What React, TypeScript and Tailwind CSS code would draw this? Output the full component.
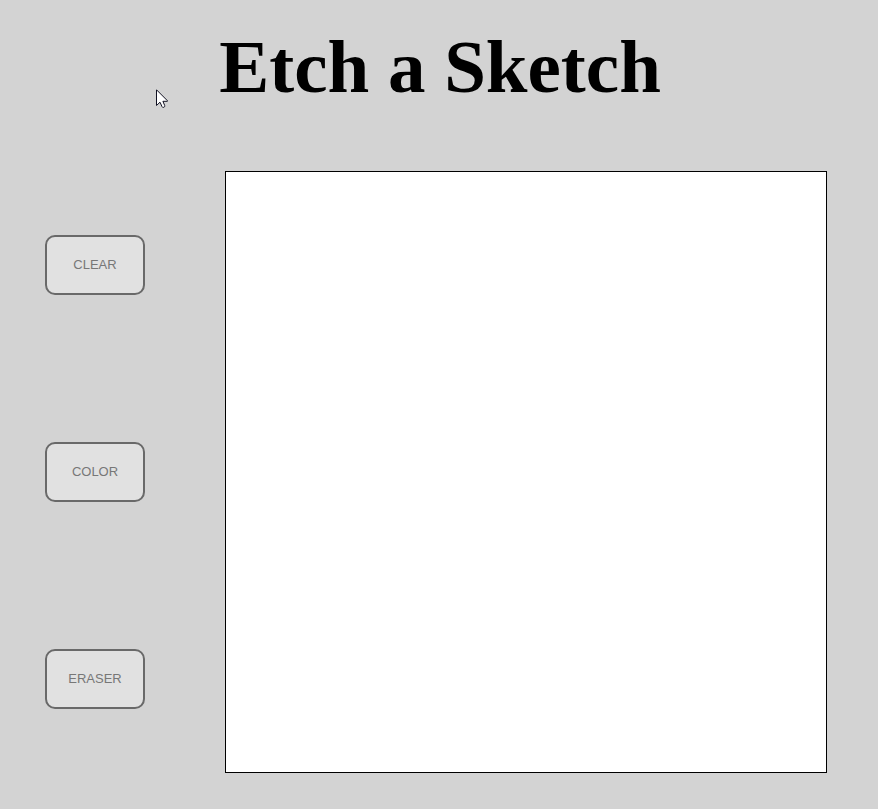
import React from "react";

const tools = ["CLEAR", "COLOR", "ERASER"];

export default function App() {
  return (
    <div className="relative flex min-h-screen flex-col bg-[#d3d3d3]">
      <h1 className="pt-6 pl-0.5 text-center font-['Liberation_Serif',serif] text-[75px] leading-[86px] font-bold text-black">
        Etch a Sketch
      </h1>
      <main className="mt-[61px] flex items-stretch justify-center gap-20 pr-1.5">
        <div className="flex flex-col justify-center gap-[147px]">
          {tools.map((tool) => (
            <button
              key={tool}
              type="button"
              className="h-15 w-25 rounded-[10px] border-2 border-[#696969] bg-[#e1e1e1] font-['Liberation_Sans',Arial,sans-serif] text-[13px] leading-4 text-[#777777]"
            >
              {tool}
            </button>
          ))}
        </div>
        <div className="aspect-square w-[602px] border border-black bg-white" />
      </main>
      <svg
        className="absolute top-[89px] left-[156px] h-[19px] w-3"
        viewBox="0 0 12 19"
        aria-hidden="true"
      >
        <path
          d="M.5 .8V16.5L4 13.2L6 17.6Q6.5 18.8 7.8 18.3Q9.2 17.7 8.7 16.5L6.9 12.3H11.4V11.7Z"
          fill="white"
          stroke="#111122"
          strokeWidth="1"
        />
      </svg>
    </div>
  );
}
